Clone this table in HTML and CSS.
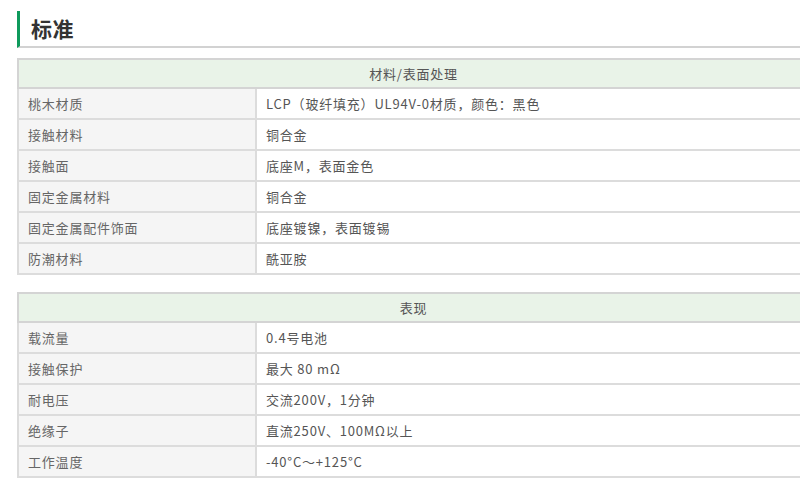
FILE: index.html
```html
<!DOCTYPE html>
<html lang="zh">
<head>
<meta charset="utf-8">
<link rel="stylesheet" href="styles.css">
</head>
<body>
<div class="page">
  <h2 class="title">标准</h2>

  <table class="spec">
    <thead>
      <tr><th colspan="2">材料/表面处理</th></tr>
    </thead>
    <tbody>
      <tr><td class="k">桃木材质</td><td class="v">LCP（玻纤填充）UL94V-0材质，颜色：黑色</td></tr>
      <tr><td class="k">接触材料</td><td class="v">铜合金</td></tr>
      <tr><td class="k">接触面</td><td class="v">底座M，表面金色</td></tr>
      <tr><td class="k">固定金属材料</td><td class="v">铜合金</td></tr>
      <tr><td class="k">固定金属配件饰面</td><td class="v">底座镀镍，表面镀锡</td></tr>
      <tr><td class="k">防潮材料</td><td class="v">酰亚胺</td></tr>
    </tbody>
  </table>

  <table class="spec">
    <thead>
      <tr><th colspan="2">表现</th></tr>
    </thead>
    <tbody>
      <tr><td class="k">载流量</td><td class="v">0.4号电池</td></tr>
      <tr><td class="k">接触保护</td><td class="v">最大 80 mΩ</td></tr>
      <tr><td class="k">耐电压</td><td class="v">交流200V，1分钟</td></tr>
      <tr><td class="k">绝缘子</td><td class="v">直流250V、100MΩ以上</td></tr>
      <tr><td class="k">工作温度</td><td class="v">-40°C～+125°C</td></tr>
    </tbody>
  </table>
</div>
</body>
</html>
```

FILE: styles.css
```css
html, body {
  margin: 0;
  padding: 0;
  background: #fff;
  overflow: hidden;
}
body {
  width: 800px;
  font-family: "Noto Sans CJK SC", "Noto Sans", "Liberation Sans", sans-serif;
  color: #555;
}
.page {
  padding: 11px 0 0 17px;
  width: 830px;
}
.title {
  margin: 0;
  height: 35px;
  line-height: 35px;
  padding-left: 11px;
  border-left: 3px solid #0e9a5c;
  border-bottom: 2px solid #d2d2d2;
  font-size: 21px;
  font-weight: bold;
  color: #333;
  letter-spacing: 0.5px;
}
.spec {
  border-collapse: collapse;
  width: 793px;
  margin-top: 10px;
  font-size: 13px;
  letter-spacing: 0.8px;
}
.spec + .spec {
  margin-top: 17px;
}
.spec th {
  background: #e9f3e8;
  border: 2px solid #d4d4d4;
  height: 27px;
  padding: 0;
  font-weight: normal;
  color: #555;
  text-align: center;
}
.spec td {
  border: 2px solid #dcdcdc;
  height: 29px;
  padding: 0 9px;
  text-align: left;
}
.spec td.k {
  width: 218px;
  background: #f5f5f5;
  color: #666;
}
.spec td.v {
  background: #fff;
  color: #555;
}
```
